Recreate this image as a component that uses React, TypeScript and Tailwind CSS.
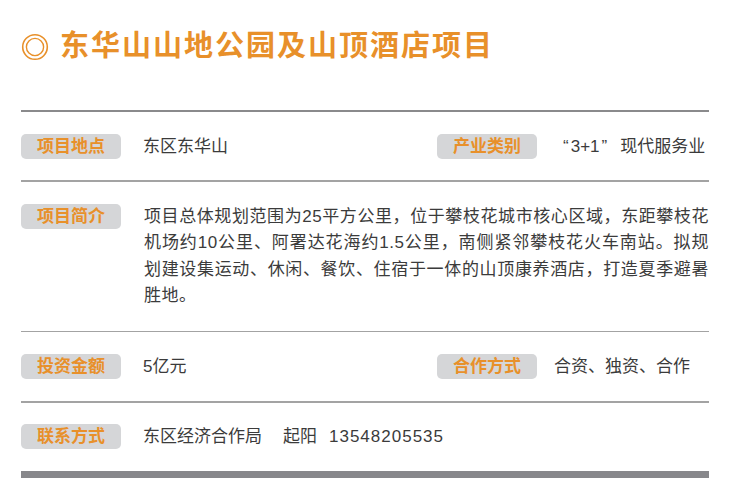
const font = { fontFamily: '"Liberation Sans", "Noto Sans CJK SC", sans-serif' };

function Label({ children }: { children: React.ReactNode }) {
  return (
    <div className="w-[100px] h-[25px] shrink-0 rounded-[5px] bg-[#d5d6d8] flex items-center justify-center text-[17px] font-bold text-[#e8902a] leading-none">
      {children}
    </div>
  );
}

function Rule() {
  return <div className="h-[1.5px] bg-[#a3a3a3]" />;
}

export default function App() {
  return (
    <div className="w-[736px] h-[500px] bg-white text-[#3b3b3b]" style={font}>
      {/* Title */}
      <div className="flex items-center h-[92px] pl-[21px] pt-[1px]">
        <svg width="28" height="28" viewBox="0 0 28 28" className="shrink-0">
          <circle cx="14" cy="14" r="12.3" fill="none" stroke="#e8902a" strokeWidth="1.6" />
          <circle cx="14" cy="14" r="8.6" fill="none" stroke="#e8902a" strokeWidth="1.4" />
        </svg>
        <h1 className="ml-[11px] text-[29px] font-bold tracking-[2px] text-[#e8902a] leading-none">
          东华山山地公园及山顶酒店项目
        </h1>
      </div>

      <div className="mt-[18px] ml-[21px] w-[688px]">
        <div className="h-[2px] bg-[#8a8a8c]" />

        {/* 项目地点 / 产业类别 */}
        <div className="flex items-center h-[68px] pt-[1px]">
          <Label>项目地点</Label>
          <span className="ml-[22px] w-[294px] text-[17px]">东区东华山</span>
          <Label>产业类别</Label>
          <span className="ml-[26px] text-[17px]">
            “<span className="ml-[2px]">3+1</span>
            <span className="ml-[2px] mr-[13px]">”</span>现代服务业
          </span>
        </div>
        <Rule />

        {/* 项目简介 */}
        <div className="flex items-start pt-[22px] pb-[21px]">
          <Label>项目简介</Label>
          <p className="ml-[23px] flex-1 text-[17px] leading-[26.5px] tracking-[0.5px] text-justify">
            项目总体规划范围为25平方公里，位于攀枝花城市核心区域，东距攀枝花机场约10公里、阿署达花海约1.5公里，南侧紧邻攀枝花火车南站。拟规划建设集运动、休闲、餐饮、住宿于一体的山顶康养酒店，打造夏季避暑胜地。
          </p>
        </div>
        <Rule />

        {/* 投资金额 / 合作方式 */}
        <div className="flex items-center h-[69px]">
          <Label>投资金额</Label>
          <span className="ml-[22px] w-[294px] text-[17px]">5亿元</span>
          <Label>合作方式</Label>
          <span className="ml-[17px] text-[17px]">合资、独资、合作</span>
        </div>
        <Rule />

        {/* 联系方式 */}
        <div className="flex items-center h-[68px]">
          <Label>联系方式</Label>
          <span className="ml-[22px] text-[17px]">
            东区经济合作局<span className="ml-[21px]">起阳</span>
            <span className="ml-[12px] tracking-[1px]">13548205535</span>
          </span>
        </div>
        <div className="h-[7px] bg-[#87878b]" />
      </div>
    </div>
  );
}
